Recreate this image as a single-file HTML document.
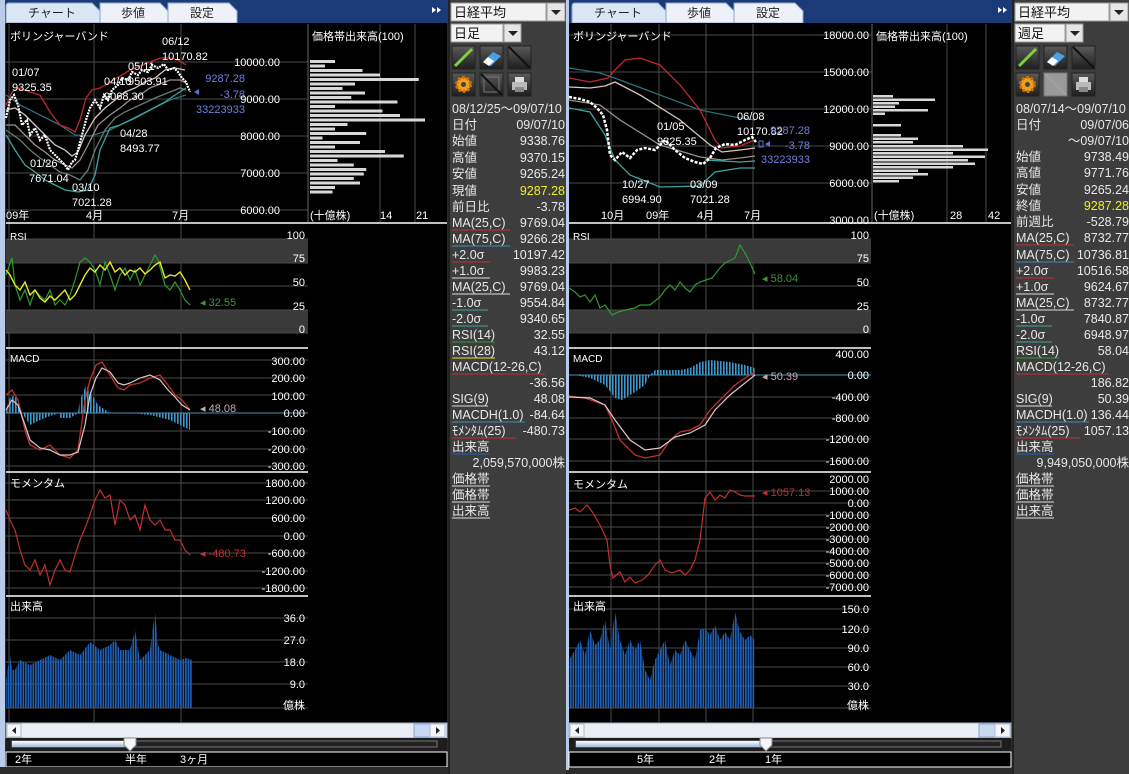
<!DOCTYPE html>
<html><head><meta charset="utf-8">
<style>
html,body{margin:0;padding:0;background:#333;}
svg{display:block;font-family:"Liberation Sans","Noto Sans CJK JP",sans-serif;}
</style></head>
<body>
<svg width="1129" height="774" viewBox="0 0 1129 774" xmlns="http://www.w3.org/2000/svg">
<defs>
<pattern id="vb" width="2.5" height="10" patternUnits="userSpaceOnUse"><rect width="1.7" height="10" fill="#1f5fb5"/></pattern>
<pattern id="hb" width="3" height="10" patternUnits="userSpaceOnUse"><rect width="1.6" height="10" fill="#3a9ad0"/></pattern>
<linearGradient id="btn" x1="0" y1="0" x2="0" y2="1"><stop offset="0" stop-color="#5a5a5a"/><stop offset="1" stop-color="#1e1e1e"/></linearGradient>
<linearGradient id="sl" x1="0" y1="0" x2="0" y2="1"><stop offset="0" stop-color="#ffffff"/><stop offset="1" stop-color="#9fb8dc"/></linearGradient>
</defs>
<rect width="1129" height="774" fill="#2e2e2e"/>

<g id="frameL">
<rect x="0" y="0" width="448" height="774" fill="#2a2a2a"/>
<rect x="0" y="0" width="448" height="23" fill="#1b3b78"/>
<rect x="0" y="0" width="5" height="770" fill="#b9cbe6"/>
<path d="M6,23 L6,6 Q6,3 9,3 L92,3 L100,11 L100,23 Z" fill="#dbe6f4" stroke="#8fa8cc"/>
<path d="M100,23 L100,3 L160,3 L168,11 L168,23 Z" fill="#eef2f8" stroke="#8fa8cc"/>
<path d="M168,23 L168,3 L229,3 L237,11 L237,23 Z" fill="#eef2f8" stroke="#8fa8cc"/>
<text x="52" y="17" font-size="12" fill="#222" text-anchor="middle">チャート</text>
<text x="133" y="17" font-size="12" fill="#222" text-anchor="middle">歩値</text>
<text x="202" y="17" font-size="12" fill="#222" text-anchor="middle">設定</text>
<path d="M432,7 l4,3 l-4,3z M437,7 l4,3 l-4,3z" fill="#fff"/>
<rect x="6" y="23" width="441" height="700" fill="#000"/>
<rect x="6" y="723" width="441" height="15" fill="#e9eef5" stroke="#9fb0c8"/>
<rect x="7" y="724" width="14" height="13" fill="#f4f6fa" stroke="#b0bccc"/>
<path d="M16,727 l-4,3.5 l4,3.5z" fill="#222"/>
<rect x="414" y="724" width="16" height="13" fill="#c7d8f0" stroke="#8aa6d0"/>
<rect x="430" y="724" width="15" height="13" fill="#f4f6fa" stroke="#b0bccc"/>
<path d="M436,727 l4,3.5 l-4,3.5z" fill="#222"/>
<rect x="6" y="738" width="441" height="14" fill="#1d1d1d"/>
<rect x="6" y="752" width="441" height="15" fill="#000" stroke="#fff" stroke-width="1"/>
<rect x="0" y="767" width="448" height="7" fill="#2a2a2a"/>
<rect x="448" y="0" width="118" height="774" fill="#3d3d3d"/>
<rect x="448" y="0" width="2" height="774" fill="#222"/>
<rect x="451" y="3" width="95" height="18" fill="#f2f2f2" stroke="#999"/>
<rect x="547" y="3" width="18" height="18" fill="#e6e6e6" stroke="#999"/>
<path d="M551,10 h10 l-5,5z" fill="#222"/>
<rect x="451" y="24" width="52" height="18" fill="#f2f2f2" stroke="#999"/>
<rect x="504" y="24" width="17" height="18" fill="#e6e6e6" stroke="#999"/>
<path d="M508,31 h10 l-5,5z" fill="#222"/>
<rect x="452" y="46" width="23" height="23" fill="url(#btn)" stroke="#222"/>
<path d="M455,66 L472,49" stroke="#7fcf3a" stroke-width="3"/>
<rect x="480" y="46" width="23" height="23" fill="url(#btn)" stroke="#222"/>
<path d="M483,62 l10,-10 l8,4 l-10,10z" fill="#4aa0e8"/><path d="M483,62 l5,-5 l6,4 l-5,5z" fill="#fff"/>
<rect x="508" y="46" width="23" height="23" fill="url(#btn)" stroke="#222"/>
<path d="M509,47 L530,68" stroke="#111" stroke-width="2"/>
<rect x="452" y="73" width="23" height="23" fill="url(#btn)" stroke="#222"/>
<circle cx="463.5" cy="84.5" r="7" fill="#f0a020" stroke="#d07000" stroke-width="3" stroke-dasharray="2.5 2"/><circle cx="463.5" cy="84.5" r="2.5" fill="#444"/>
<rect x="480" y="73" width="23" height="23" fill="url(#btn)" stroke="#222"/>
<rect x="484" y="77" width="15" height="15" fill="none" stroke="#777"/><path d="M481,74 L502,95" stroke="#111" stroke-width="2"/>
<rect x="508" y="73" width="23" height="23" fill="url(#btn)" stroke="#222"/>
<rect x="512" y="82" width="15" height="8" fill="#bbb"/><rect x="515" y="77" width="9" height="5" fill="#ddd"/><rect x="515" y="87" width="9" height="5" fill="#888"/>
</g>

<g transform="translate(566,0)">
<rect x="0" y="0" width="448" height="774" fill="#2a2a2a"/>
<rect x="0" y="0" width="448" height="23" fill="#1b3b78"/>
<rect x="0" y="0" width="3" height="770" fill="#b9cbe6"/>
<path d="M6,23 L6,6 Q6,3 9,3 L92,3 L100,11 L100,23 Z" fill="#dbe6f4" stroke="#8fa8cc"/>
<path d="M100,23 L100,3 L160,3 L168,11 L168,23 Z" fill="#eef2f8" stroke="#8fa8cc"/>
<path d="M168,23 L168,3 L229,3 L237,11 L237,23 Z" fill="#eef2f8" stroke="#8fa8cc"/>
<text x="52" y="17" font-size="12" fill="#222" text-anchor="middle">チャート</text>
<text x="133" y="17" font-size="12" fill="#222" text-anchor="middle">歩値</text>
<text x="202" y="17" font-size="12" fill="#222" text-anchor="middle">設定</text>
<path d="M432,7 l4,3 l-4,3z M437,7 l4,3 l-4,3z" fill="#fff"/>
<rect x="3" y="23" width="442" height="700" fill="#000"/>
<rect x="3" y="723" width="442" height="15" fill="#e9eef5" stroke="#9fb0c8"/>
<rect x="4" y="724" width="14" height="13" fill="#f4f6fa" stroke="#b0bccc"/>
<path d="M13,727 l-4,3.5 l4,3.5z" fill="#222"/>
<rect x="413" y="724" width="16" height="13" fill="#c7d8f0" stroke="#8aa6d0"/>
<rect x="429" y="724" width="15" height="13" fill="#f4f6fa" stroke="#b0bccc"/>
<path d="M435,727 l4,3.5 l-4,3.5z" fill="#222"/>
<rect x="3" y="738" width="442" height="14" fill="#1d1d1d"/>
<rect x="3" y="752" width="442" height="15" fill="#000" stroke="#fff" stroke-width="1"/>
<rect x="446" y="0" width="117" height="774" fill="#3d3d3d"/>
<rect x="446" y="0" width="2" height="774" fill="#222"/>
<rect x="449" y="3" width="94" height="18" fill="#f2f2f2" stroke="#999"/>
<rect x="544" y="3" width="18" height="18" fill="#e6e6e6" stroke="#999"/>
<path d="M548,10 h10 l-5,5z" fill="#222"/>
<rect x="449" y="24" width="50" height="18" fill="#f2f2f2" stroke="#999"/>
<rect x="500" y="24" width="17" height="18" fill="#e6e6e6" stroke="#999"/>
<path d="M504,31 h10 l-5,5z" fill="#222"/>
<rect x="450" y="46" width="23" height="23" fill="url(#btn)" stroke="#222"/>
<path d="M453,66 L470,49" stroke="#7fcf3a" stroke-width="3"/>
<rect x="478" y="46" width="23" height="23" fill="url(#btn)" stroke="#222"/>
<path d="M481,62 l10,-10 l8,4 l-10,10z" fill="#4aa0e8"/><path d="M481,62 l5,-5 l6,4 l-5,5z" fill="#fff"/>
<rect x="506" y="46" width="23" height="23" fill="url(#btn)" stroke="#222"/>
<path d="M507,47 L528,68" stroke="#111" stroke-width="2"/>
<rect x="450" y="73" width="23" height="23" fill="url(#btn)" stroke="#222"/>
<circle cx="461.5" cy="84.5" r="7" fill="#f0a020" stroke="#d07000" stroke-width="3" stroke-dasharray="2.5 2"/><circle cx="461.5" cy="84.5" r="2.5" fill="#444"/>
<rect x="478" y="73" width="23" height="23" fill="#9a9a9a" stroke="#777"/>
<path d="M479,74 L500,95" stroke="#aaa" stroke-width="1"/>
<rect x="506" y="73" width="23" height="23" fill="url(#btn)" stroke="#222"/>
<rect x="510" y="82" width="15" height="8" fill="#bbb"/><rect x="513" y="77" width="9" height="5" fill="#ddd"/><rect x="513" y="87" width="9" height="5" fill="#888"/>
</g>

<g font-size="13" fill="#111">
<text x="454" y="17">日経平均</text><text x="454" y="38">日足</text>
<text x="1018" y="17">日経平均</text><text x="1018" y="38">週足</text>
</g>

<rect x="12" y="741" width="425" height="6" fill="#222" stroke="#777"/>
<rect x="12" y="741" width="118" height="6" fill="url(#sl)"/>
<path d="M124,738 h12 v7 l-6,6 l-6,-6z" fill="#f4f6fa" stroke="#888"/>
<rect x="576" y="741" width="425" height="6" fill="#222" stroke="#777"/>
<rect x="576" y="741" width="190" height="6" fill="url(#sl)"/>
<path d="M760,738 h12 v7 l-6,6 l-6,-6z" fill="#f4f6fa" stroke="#888"/>
<g font-size="11" fill="#fff">
<text x="15" y="763">2年</text><text x="125" y="763">半年</text><text x="180" y="763">3ヶ月</text>
<text x="637" y="763">5年</text><text x="709" y="763">2年</text><text x="765" y="763">1年</text>
</g>

<!-- LEFT CHART -->
<g stroke="#4a4a4a" stroke-width="1">
<line x1="6" y1="62" x2="308" y2="62"/><line x1="6" y1="99" x2="308" y2="99"/><line x1="6" y1="136" x2="308" y2="136"/><line x1="6" y1="173" x2="308" y2="173"/><line x1="6" y1="210" x2="308" y2="210"/>
<line x1="9" y1="24" x2="9" y2="722"/><line x1="94" y1="24" x2="94" y2="722"/><line x1="181" y1="24" x2="181" y2="722"/>
<line x1="380" y1="24" x2="380" y2="222"/><line x1="415" y1="24" x2="415" y2="222"/>
<line x1="308" y1="24" x2="308" y2="222" stroke="#666"/>
</g>
<rect x="6" y="239" width="302" height="24" fill="#3a3a3a"/>
<rect x="6" y="310" width="302" height="23" fill="#3a3a3a"/>
<g stroke="#4a4a4a">
<line x1="6" y1="239" x2="308" y2="239"/><line x1="6" y1="263" x2="308" y2="263"/><line x1="6" y1="286" x2="308" y2="286"/><line x1="6" y1="310" x2="308" y2="310"/><line x1="6" y1="333" x2="308" y2="333"/>
<line x1="6" y1="360" x2="308" y2="360"/><line x1="6" y1="378" x2="308" y2="378"/><line x1="6" y1="395" x2="308" y2="395"/><line x1="6" y1="431" x2="308" y2="431"/><line x1="6" y1="449" x2="308" y2="449"/><line x1="6" y1="466" x2="308" y2="466"/>
<line x1="6" y1="483" x2="308" y2="483"/><line x1="6" y1="500" x2="308" y2="500"/><line x1="6" y1="518" x2="308" y2="518"/><line x1="6" y1="536" x2="308" y2="536"/><line x1="6" y1="553" x2="308" y2="553"/><line x1="6" y1="571" x2="308" y2="571"/><line x1="6" y1="588" x2="308" y2="588"/>
<line x1="6" y1="618" x2="308" y2="618"/><line x1="6" y1="640" x2="308" y2="640"/><line x1="6" y1="662" x2="308" y2="662"/><line x1="6" y1="684" x2="308" y2="684"/><line x1="6" y1="708" x2="308" y2="708"/>
</g>
<g stroke="#fff" stroke-width="1.5">
<line x1="6" y1="223" x2="447" y2="223"/><line x1="6" y1="348" x2="308" y2="348"/><line x1="6" y1="472" x2="308" y2="472"/><line x1="6" y1="596" x2="308" y2="596"/>
</g>
<line x1="6" y1="413" x2="308" y2="413" stroke="#4a8fb8"/>

<g fill="none" stroke-width="1.3">
<polyline stroke="#2c6e7a" points="6,95 20,105 40,115 60,125 75,135 90,136 110,130 130,120 150,110 170,100 186,95"/>
<polyline stroke="#c0282c" points="6,105 12,92 18,88 25,90 30,92 40,95 50,112 60,125 68,128 75,132 80,120 86,98 92,90 100,88 110,82 120,76 130,70 140,66 150,62 160,58 170,58 178,60 186,65"/>
<polyline stroke="#d9c7bb" points="6,110 15,108 25,115 35,125 45,135 55,145 65,150 72,156 78,152 85,135 95,118 105,108 115,100 125,92 135,88 145,82 155,78 165,70 175,68 185,70"/>
<polyline stroke="#9f9088" points="6,125 15,125 25,135 35,145 45,152 55,160 65,165 72,168 80,160 88,145 98,125 110,115 120,108 130,100 140,95 150,88 160,84 170,80 180,80 186,83"/>
<polyline stroke="#6a7a70" points="6,130 20,140 30,150 40,158 50,165 60,172 70,175 80,180 88,170 95,150 105,130 115,118 125,112 140,105 155,98 170,92 180,88 186,90"/>
<polyline stroke="#3aa5a0" points="6,135 15,150 25,165 35,172 45,180 55,185 65,190 78,192 88,190 95,175 100,150 110,128 120,125 135,118 150,110 165,102 175,95 186,88"/>
<polyline stroke="#fff" stroke-width="2.2" stroke-dasharray="2 1" points="6,118 10,100 14,95 18,105 22,125 27,120 30,135 35,128 40,140 45,135 50,150 55,155 60,160 65,165 68,170 72,162 75,160 78,150 82,135 86,120 90,108 95,100 100,108 104,95 108,100 112,90 118,85 122,78 128,80 132,72 138,75 142,70 148,72 152,65 158,68 164,64 168,70 174,68 178,72 182,78 186,82 190,92"/>
</g>
<path d="M194,92 l5,-3 v6z" fill="#5a6fd8"/>
<g font-size="11" fill="#fff">
<text x="10" y="40">ボリンジャーバンド</text>
<text x="312" y="40">価格帯出来高(100)</text>
<text x="12" y="76">01/07</text><text x="12" y="91">9325.35</text>
<text x="162" y="45">06/12</text><text x="162" y="60">10170.82</text>
<text x="128" y="70">05/11</text><text x="104" y="85">04/10</text><text x="128" y="85">9503.91</text><text x="104" y="100">9068.30</text>
<text x="120" y="137">04/28</text><text x="120" y="152">8493.77</text>
<text x="30" y="167">01/26</text><text x="29" y="182">7671.04</text>
<text x="72" y="191">03/10</text><text x="72" y="206">7021.28</text>
<text x="6" y="219">09年</text><text x="86" y="219">4月</text><text x="172" y="219">7月</text>
<text x="310" y="219">(十億株)</text><text x="380" y="219">14</text><text x="416" y="219">21</text>
</g>
<g font-size="11" fill="#6f7fe0" text-anchor="end">
<text x="245" y="82">9287.28</text><text x="245" y="98">-3.78</text><text x="245" y="113">33223933</text>
</g>
<g font-size="11" fill="#fff" text-anchor="end">
<text x="280" y="66">10000.00</text><text x="280" y="103">9000.00</text><text x="280" y="140">8000.00</text><text x="280" y="177">7000.00</text><text x="280" y="214">6000.00</text>
<text x="305" y="239">100</text><text x="305" y="262">75</text><text x="305" y="286">50</text><text x="305" y="310">25</text><text x="305" y="333">0</text>
<text x="305" y="365">300.00</text><text x="305" y="382">200.00</text><text x="305" y="400">100.00</text><text x="305" y="417">0.00</text><text x="305" y="435">-100.00</text><text x="305" y="453">-200.00</text><text x="305" y="470">-300.00</text>
<text x="305" y="487">1800.00</text><text x="305" y="504">1200.00</text><text x="305" y="522">600.00</text><text x="305" y="540">0.00</text><text x="305" y="557">-600.00</text><text x="305" y="575">-1200.00</text><text x="305" y="592">-1800.00</text>
<text x="305" y="622">36.0</text><text x="305" y="644">27.0</text><text x="305" y="666">18.0</text><text x="305" y="688">9.0</text><text x="305" y="709">億株</text>
</g>
<g fill="#d8d8d8" transform="translate(310,0) scale(1.25,1) translate(-310,0)">
<rect x="310" y="60" width="20" height="3"/><rect x="310" y="64.5" width="12" height="3"/><rect x="310" y="69" width="42" height="3"/><rect x="310" y="73.5" width="56" height="3"/><rect x="310" y="78" width="87" height="3"/><rect x="310" y="82.5" width="36" height="3"/><rect x="310" y="87" width="26" height="3"/><rect x="310" y="91.5" width="44" height="3"/><rect x="310" y="96" width="33" height="3"/><rect x="310" y="100.5" width="70" height="3"/><rect x="310" y="105" width="20" height="3"/><rect x="310" y="109.5" width="58" height="3"/><rect x="310" y="114" width="72" height="3"/><rect x="310" y="118.5" width="92" height="3"/><rect x="310" y="123" width="30" height="3"/><rect x="310" y="127.5" width="20" height="3"/><rect x="310" y="132" width="45" height="3"/><rect x="310" y="136.5" width="10" height="3"/><rect x="310" y="141" width="40" height="3"/><rect x="310" y="145.5" width="20" height="3"/><rect x="310" y="150" width="60" height="3"/><rect x="310" y="154.5" width="75" height="3"/><rect x="310" y="159" width="22" height="3"/><rect x="310" y="163.5" width="35" height="3"/><rect x="310" y="168" width="45" height="3"/><rect x="310" y="172.5" width="43" height="3"/><rect x="310" y="177" width="35" height="3"/><rect x="310" y="181.5" width="40" height="3"/><rect x="310" y="186" width="20" height="3"/><rect x="310" y="190.5" width="18" height="3"/>
</g>
<polyline fill="none" stroke="#2f9a2f" stroke-width="1.2" points="6,275 12,258 15,285 20,300 25,290 30,305 35,290 40,296 45,300 50,290 55,305 60,300 65,305 70,295 75,280 80,262 85,258 90,262 95,270 100,285 105,262 110,275 115,290 120,275 125,268 130,280 135,270 140,285 145,275 150,265 155,255 158,260 165,285 170,290 175,282 180,290 185,300 190,305"/>
<polyline fill="none" stroke="#e8e82a" stroke-width="1.4" points="6,270 10,275 15,285 20,290 25,282 30,295 35,290 40,298 45,302 50,296 55,300 60,295 65,290 70,300 75,295 80,285 85,275 90,268 95,272 100,265 105,270 110,262 115,272 120,268 125,275 130,270 135,272 140,268 145,274 150,270 155,265 160,262 165,278 170,275 175,276 180,272 185,280 190,290"/>
<text x="200" y="306" font-size="11" fill="#3a9a3a">◂ 32.55</text>
<text x="10" y="240" font-size="10" fill="#fff">RSI</text>
<polygon fill="url(#hb)" points="6,413 8,400 14,395 20,405 22,413 60,413 60,418 70,418 78,413 80,400 86,385 92,395 98,405 110,413 190,413 190,430 170,420 150,415 130,413"/>
<polygon fill="url(#hb)" points="22,413 30,425 40,420 50,416 60,413"/>
<polyline fill="none" stroke="#c03030" stroke-width="1.3" points="6,395 12,390 18,400 25,430 30,445 40,450 50,445 60,455 70,458 78,450 85,400 90,380 96,365 102,362 110,375 118,388 124,390 130,385 140,383 150,378 160,375 168,385 175,395 182,400 190,410"/>
<polyline fill="none" stroke="#e0c8c8" stroke-width="1.2" points="6,410 12,400 18,405 25,425 30,440 40,448 50,450 60,455 70,455 78,452 85,425 90,395 96,378 102,368 110,372 118,383 124,385 130,383 140,378 150,375 160,380 168,390 175,397 182,405 190,410"/>
<text x="200" y="412" font-size="11" fill="#c8a8a8">◂ 48.08</text>
<text x="10" y="362" font-size="10" fill="#fff">MACD</text>
<polyline fill="none" stroke="#c03030" stroke-width="1.2" points="6,510 10,520 15,530 20,550 25,565 30,570 35,560 40,575 45,565 50,585 55,570 60,560 65,570 70,572 75,555 80,540 85,528 90,515 95,500 100,490 105,498 110,495 115,525 120,500 125,505 130,520 135,515 140,530 145,505 150,520 155,525 160,520 165,530 170,530 175,540 180,540 185,550 190,555"/>
<text x="200" y="557" font-size="11" fill="#c03030">◂ -480.73</text>
<text x="10" y="487" font-size="11" fill="#fff">モメンタム</text>
<polygon fill="url(#vb)" points="6,680 10,655 12,670 15,670 20,660 30,665 40,660 50,655 60,660 70,650 80,655 90,642 100,650 110,645 115,640 120,650 130,650 135,630 140,660 150,650 155,612 158,645 160,650 170,655 180,660 186,658 192,660 192,708 6,708"/>
<text x="10" y="610" font-size="11" fill="#fff">出来高</text>

<!-- RIGHT CHART -->
<g stroke="#4a4a4a">
<line x1="569" y1="35" x2="872" y2="35"/><line x1="569" y1="72" x2="872" y2="72"/><line x1="569" y1="109" x2="872" y2="109"/><line x1="569" y1="146" x2="872" y2="146"/><line x1="569" y1="183" x2="872" y2="183"/>
<line x1="611" y1="24" x2="611" y2="722"/><line x1="659" y1="24" x2="659" y2="722"/><line x1="706" y1="24" x2="706" y2="722"/><line x1="753" y1="24" x2="753" y2="722"/>
<line x1="947" y1="24" x2="947" y2="222"/><line x1="986" y1="24" x2="986" y2="222"/>
<line x1="872" y1="24" x2="872" y2="222" stroke="#666"/>
</g>
<rect x="569" y="239" width="302" height="24" fill="#3a3a3a"/>
<rect x="569" y="310" width="302" height="23" fill="#3a3a3a"/>
<g stroke="#4a4a4a">
<line x1="569" y1="239" x2="871" y2="239"/><line x1="569" y1="263" x2="871" y2="263"/><line x1="569" y1="286" x2="871" y2="286"/><line x1="569" y1="310" x2="871" y2="310"/><line x1="569" y1="333" x2="871" y2="333"/>
<line x1="569" y1="397" x2="871" y2="397"/><line x1="569" y1="418" x2="871" y2="418"/><line x1="569" y1="439" x2="871" y2="439"/><line x1="569" y1="461" x2="871" y2="461"/>
<line x1="569" y1="491" x2="871" y2="491"/><line x1="569" y1="503" x2="871" y2="503"/><line x1="569" y1="515" x2="871" y2="515"/><line x1="569" y1="527" x2="871" y2="527"/><line x1="569" y1="539" x2="871" y2="539"/><line x1="569" y1="551" x2="871" y2="551"/><line x1="569" y1="563" x2="871" y2="563"/><line x1="569" y1="575" x2="871" y2="575"/><line x1="569" y1="587" x2="871" y2="587"/>
<line x1="569" y1="609" x2="871" y2="609"/><line x1="569" y1="629" x2="871" y2="629"/><line x1="569" y1="648" x2="871" y2="648"/><line x1="569" y1="667" x2="871" y2="667"/><line x1="569" y1="686" x2="871" y2="686"/><line x1="569" y1="708" x2="871" y2="708"/>
</g>
<g stroke="#fff" stroke-width="1.5">
<line x1="569" y1="223" x2="1011" y2="223"/><line x1="569" y1="348" x2="871" y2="348"/><line x1="569" y1="472" x2="871" y2="472"/><line x1="569" y1="596" x2="871" y2="596"/>
</g>
<line x1="569" y1="375" x2="871" y2="375" stroke="#4a8fb8"/>
<g fill="none" stroke-width="1.3">
<polyline stroke="#2c6e7a" points="569,68 600,73 620,80 660,95 700,110 740,118 755,120"/>
<polyline stroke="#c0282c" points="569,78 590,82 608,78 615,70 625,60 640,58 660,65 680,85 700,110 715,140 722,148 740,146 755,140"/>
<polyline stroke="#d9c7bb" points="569,87 590,88 605,86 615,82 640,95 680,120 710,145 722,152 740,150 755,148"/>
<polyline stroke="#9f9088" points="569,100 600,105 620,120 660,145 700,157 722,160 740,158 755,156"/>
<polyline stroke="#3aa5a0" points="569,108 590,112 605,135 615,160 630,175 660,187 700,186 715,172 740,168 755,168"/>
<polyline stroke="#3aa5a0" points="705,160 740,162 755,161"/>
<polyline stroke="#fff" stroke-width="2.5" stroke-dasharray="3 1.5" points="569,97 580,99 590,102 597,108 603,115 607,130 610,155 615,160 622,152 630,158 637,150 645,148 655,150 665,140 675,150 685,158 695,162 703,164 710,158 716,148 725,144 735,145 745,140 752,137 756,142"/>
</g>
<rect x="759" y="141" width="4" height="6" fill="none" stroke="#5a6fd8"/>
<path d="M765,144 l5,-3 v6z" fill="#5a6fd8"/>
<g font-size="11" fill="#fff">
<text x="573" y="40">ボリンジャーバンド</text>
<text x="876" y="40">価格帯出来高(100)</text>
<text x="657" y="130">01/05</text><text x="657" y="145">9325.35</text>
<text x="737" y="120">06/08</text><text x="737" y="135">10170.82</text>
<text x="622" y="188">10/27</text><text x="622" y="203">6994.90</text>
<text x="690" y="188">03/09</text><text x="690" y="203">7021.28</text>
<text x="601" y="219">10月</text><text x="646" y="219">09年</text><text x="697" y="219">4月</text><text x="744" y="219">7月</text>
<text x="874" y="219">(十億株)</text><text x="950" y="219">28</text><text x="988" y="219">42</text>
</g>
<g font-size="11" fill="#6f7fe0" text-anchor="end">
<text x="810" y="134">9287.28</text><text x="810" y="149">-3.78</text><text x="810" y="163">33223933</text>
</g>
<g font-size="11" fill="#fff" text-anchor="end">
<text x="869" y="39">18000.00</text><text x="869" y="76">15000.00</text><text x="869" y="113">12000.00</text><text x="869" y="150">9000.00</text><text x="869" y="187">6000.00</text><text x="869" y="224">3000.00</text>
<text x="869" y="239">100</text><text x="869" y="262">75</text><text x="869" y="286">50</text><text x="869" y="310">25</text><text x="869" y="333">0</text>
<text x="869" y="358">400.00</text><text x="869" y="379">0.00</text><text x="869" y="401">-400.00</text><text x="869" y="422">-800.00</text><text x="869" y="443">-1200.00</text><text x="869" y="465">-1600.00</text>
<text x="869" y="483">2000.00</text><text x="869" y="495">1000.00</text><text x="869" y="507">0.00</text><text x="869" y="519">-1000.00</text><text x="869" y="531">-2000.00</text><text x="869" y="543">-3000.00</text><text x="869" y="555">-4000.00</text><text x="869" y="567">-5000.00</text><text x="869" y="579">-6000.00</text><text x="869" y="591">-7000.00</text>
<text x="869" y="613">150.0</text><text x="869" y="633">120.0</text><text x="869" y="652">90.0</text><text x="869" y="671">60.0</text><text x="869" y="690">30.0</text><text x="869" y="709">億株</text>
</g>
<g fill="#d8d8d8">
<rect x="873" y="95" width="20" height="2.5"/><rect x="873" y="98.5" width="62" height="2.5"/><rect x="873" y="102" width="26" height="2.5"/><rect x="873" y="105.5" width="22" height="2.5"/><rect x="873" y="109" width="55" height="2.5"/><rect x="873" y="112.5" width="12" height="2.5"/>
<rect x="873" y="124" width="28" height="2.5"/>
<rect x="873" y="134" width="28" height="2.5"/><rect x="873" y="137.5" width="45" height="2.5"/><rect x="873" y="141" width="40" height="2.5"/>
<rect x="873" y="145" width="90" height="2.5"/><rect x="873" y="148.5" width="115" height="2.5"/><rect x="873" y="152" width="80" height="2.5"/><rect x="873" y="155.5" width="112" height="2.5"/><rect x="873" y="159" width="95" height="2.5"/><rect x="873" y="162.5" width="102" height="2.5"/><rect x="873" y="166" width="80" height="2.5"/><rect x="873" y="169.5" width="45" height="2.5"/><rect x="873" y="173" width="55" height="2.5"/><rect x="873" y="176.5" width="40" height="2.5"/><rect x="873" y="180" width="26" height="2.5"/>
</g>
<polyline fill="none" stroke="#2f9a2f" stroke-width="1.2" points="569,288 575,292 580,297 585,295 590,302 595,295 600,308 605,305 612,315 618,312 625,310 635,308 640,305 650,305 660,297 665,290 670,285 675,290 680,282 685,288 690,292 695,285 700,282 706,280 712,278 720,268 725,263 735,258 740,245 745,253 750,263 755,274"/>
<text x="762" y="282" font-size="11" fill="#3a9a3a">◂ 58.04</text>
<text x="573" y="240" font-size="10" fill="#fff">RSI</text>
<polygon fill="url(#hb)" points="575,375 590,378 605,385 615,398 622,400 635,392 645,385 650,375 655,370 680,370 690,368 700,362 710,360 730,362 745,365 755,368 755,375"/>
<polyline fill="none" stroke="#c03030" stroke-width="1.3" points="569,396 585,398 605,405 612,420 620,440 635,455 645,458 660,455 670,440 680,432 690,430 700,425 710,410 720,400 735,385 745,378 755,372"/>
<polyline fill="none" stroke="#e0c8c8" stroke-width="1.2" points="569,397 590,398 605,405 615,420 630,440 645,450 660,448 675,437 690,433 705,425 715,410 730,395 745,383 755,375"/>
<text x="762" y="380" font-size="11" fill="#c8a8a8">◂ 50.39</text>
<text x="573" y="362" font-size="10" fill="#fff">MACD</text>
<polyline fill="none" stroke="#c03030" stroke-width="1.2" points="569,510 575,508 580,512 587,505 593,513 600,525 607,540 610,565 613,578 620,572 625,582 630,577 635,583 642,580 648,575 655,565 660,560 665,570 672,573 680,570 685,575 690,570 695,560 700,540 705,498 710,492 715,500 720,495 725,498 730,490 735,492 740,495 745,496 755,496"/>
<text x="762" y="496" font-size="11" fill="#c03030">◂ 1057.13</text>
<text x="573" y="488" font-size="11" fill="#fff">モメンタム</text>
<polygon fill="url(#vb)" points="569,660 575,650 580,640 585,655 590,630 595,645 600,640 605,620 610,650 615,612 620,640 625,655 630,640 635,650 640,640 645,670 650,680 655,660 660,650 665,640 670,665 675,650 680,655 685,640 690,650 695,660 700,630 705,628 710,635 715,625 720,640 725,632 730,640 735,612 740,632 745,640 750,635 755,640 755,708 569,708"/>
<text x="573" y="610" font-size="11" fill="#fff">出来高</text>

<!-- SIDE TEXT LEFT -->
<g font-size="12.5" fill="#e8e8e8">
<text x="452" y="113">08/12/25～09/07/10</text>
<text x="452" y="129">日付</text><text x="452" y="145">始値</text><text x="452" y="162">高値</text><text x="452" y="178">安値</text><text x="452" y="195">現値</text><text x="452" y="211">前日比</text>
<text x="452" y="227">MA(25,C)</text><text x="452" y="243">MA(75,C)</text><text x="452" y="259">+2.0σ</text><text x="452" y="275">+1.0σ</text><text x="452" y="291">MA(25,C)</text><text x="452" y="307">-1.0σ</text><text x="452" y="323">-2.0σ</text><text x="452" y="339">RSI(14)</text><text x="452" y="355">RSI(28)</text><text x="452" y="371">MACD(12-26,C)</text><text x="452" y="403">SIG(9)</text><text x="452" y="419">MACDH(1.0)</text><text x="452" y="435">ﾓﾒﾝﾀﾑ(25)</text><text x="452" y="451">出来高</text>
<text x="452" y="483">価格帯</text><text x="452" y="499">価格帯</text><text x="452" y="515">出来高</text>
</g>
<g font-size="12.5" fill="#e8e8e8" text-anchor="end">
<text x="565" y="129">09/07/10</text><text x="565" y="145">9338.76</text><text x="565" y="162">9370.15</text><text x="565" y="178">9265.24</text><text x="565" y="195" fill="#f0f020">9287.28</text><text x="565" y="211">-3.78</text>
<text x="565" y="227">9769.04</text><text x="565" y="243">9266.28</text><text x="565" y="259">10197.42</text><text x="565" y="275">9983.23</text><text x="565" y="291">9769.04</text><text x="565" y="307">9554.84</text><text x="565" y="323">9340.65</text><text x="565" y="339">32.55</text><text x="565" y="355">43.12</text><text x="565" y="387">-36.56</text><text x="565" y="403">48.08</text><text x="565" y="419">-84.64</text><text x="565" y="435">-480.73</text><text x="565" y="467">2,059,570,000株</text>
</g>
<g stroke-width="1">
<line x1="452" y1="230" x2="510" y2="230" stroke="#c03030"/><line x1="452" y1="246" x2="510" y2="246" stroke="#3a8fc0"/><line x1="452" y1="262" x2="490" y2="262" stroke="#c03030"/><line x1="452" y1="278" x2="490" y2="278" stroke="#ddd"/><line x1="452" y1="294" x2="510" y2="294" stroke="#ddd"/><line x1="452" y1="310" x2="488" y2="310" stroke="#3aa5a0"/><line x1="452" y1="326" x2="488" y2="326" stroke="#3aa5a0"/><line x1="452" y1="342" x2="495" y2="342" stroke="#2f9a2f"/><line x1="452" y1="358" x2="495" y2="358" stroke="#e8e82a"/><line x1="452" y1="374" x2="545" y2="374" stroke="#c03030"/><line x1="452" y1="406" x2="488" y2="406" stroke="#ddd"/><line x1="452" y1="422" x2="525" y2="422" stroke="#3a8fc0"/><line x1="452" y1="438" x2="516" y2="438" stroke="#c03030"/><line x1="452" y1="454" x2="490" y2="454" stroke="#2060c0"/><line x1="452" y1="486" x2="490" y2="486" stroke="#ddd"/><line x1="452" y1="502" x2="490" y2="502" stroke="#ddd"/><line x1="452" y1="518" x2="490" y2="518" stroke="#ddd"/>
</g>

<!-- SIDE TEXT RIGHT -->
<g font-size="12.5" fill="#e8e8e8">
<text x="1016" y="113">08/07/14～09/07/10</text>
<text x="1016" y="129">日付</text><text x="1016" y="161">始値</text><text x="1016" y="177">高値</text><text x="1016" y="194">安値</text><text x="1016" y="210">終値</text><text x="1016" y="226">前週比</text>
<text x="1016" y="242">MA(25,C)</text><text x="1016" y="259">MA(75,C)</text><text x="1016" y="275">+2.0σ</text><text x="1016" y="291">+1.0σ</text><text x="1016" y="307">MA(25,C)</text><text x="1016" y="323">-1.0σ</text><text x="1016" y="339">-2.0σ</text><text x="1016" y="355">RSI(14)</text><text x="1016" y="371">MACD(12-26,C)</text><text x="1016" y="403">SIG(9)</text><text x="1016" y="419">MACDH(1.0)</text><text x="1016" y="435">ﾓﾒﾝﾀﾑ(25)</text><text x="1016" y="451">出来高</text>
<text x="1016" y="483">価格帯</text><text x="1016" y="499">価格帯</text><text x="1016" y="515">出来高</text>
</g>
<g font-size="12.5" fill="#e8e8e8" text-anchor="end">
<text x="1129" y="129">09/07/06</text><text x="1129" y="145">～09/07/10</text><text x="1129" y="161">9738.49</text><text x="1129" y="177">9771.76</text><text x="1129" y="194">9265.24</text><text x="1129" y="210" fill="#f0f020">9287.28</text><text x="1129" y="226">-528.79</text>
<text x="1129" y="242">8732.77</text><text x="1129" y="259">10736.81</text><text x="1129" y="275">10516.58</text><text x="1129" y="291">9624.67</text><text x="1129" y="307">8732.77</text><text x="1129" y="323">7840.87</text><text x="1129" y="339">6948.97</text><text x="1129" y="355">58.04</text><text x="1129" y="387">186.82</text><text x="1129" y="403">50.39</text><text x="1129" y="419">136.44</text><text x="1129" y="435">1057.13</text><text x="1129" y="467">9,949,050,000株</text>
</g>
<g stroke-width="1">
<line x1="1016" y1="245" x2="1074" y2="245" stroke="#c03030"/><line x1="1016" y1="262" x2="1074" y2="262" stroke="#3a8fc0"/><line x1="1016" y1="278" x2="1054" y2="278" stroke="#c03030"/><line x1="1016" y1="294" x2="1054" y2="294" stroke="#ddd"/><line x1="1016" y1="310" x2="1074" y2="310" stroke="#ddd"/><line x1="1016" y1="326" x2="1052" y2="326" stroke="#3aa5a0"/><line x1="1016" y1="342" x2="1052" y2="342" stroke="#3aa5a0"/><line x1="1016" y1="358" x2="1059" y2="358" stroke="#2f9a2f"/><line x1="1016" y1="374" x2="1109" y2="374" stroke="#c03030"/><line x1="1016" y1="406" x2="1052" y2="406" stroke="#ddd"/><line x1="1016" y1="422" x2="1089" y2="422" stroke="#3a8fc0"/><line x1="1016" y1="438" x2="1080" y2="438" stroke="#c03030"/><line x1="1016" y1="454" x2="1054" y2="454" stroke="#2060c0"/><line x1="1016" y1="486" x2="1054" y2="486" stroke="#ddd"/><line x1="1016" y1="502" x2="1054" y2="502" stroke="#ddd"/><line x1="1016" y1="518" x2="1054" y2="518" stroke="#ddd"/>
</g>
</svg>
</body></html>
